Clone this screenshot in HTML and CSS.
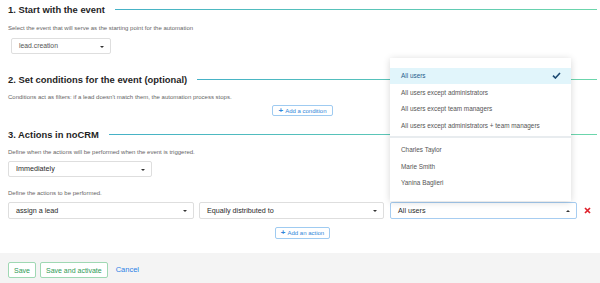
FILE: index.html
```html
<!DOCTYPE html>
<html lang="en">
<head>
    <meta charset="UTF-8">
    <title>Automation</title>
    <link rel="stylesheet" href="styles.css">
</head>
<body>
    <div class="content">
        <h2 class="step-title">1. Start with the event</h2>
        <p class="hint">Select the event that will serve as the starting point for the automation</p>
        <div class="select select-event">lead.creation</div>

        <h2 class="step-title step-gap">2. Set conditions for the event (optional)</h2>
        <p class="hint hint-tight">Conditions act as filters: if a lead doesn't match them, the automation process stops.</p>
        <div class="add-row">
            <button class="add-btn"><span class="plus">+</span> Add a condition</button>
        </div>

        <h2 class="step-title step-gap-small">3. Actions in noCRM</h2>
        <p class="hint hint-tight">Define when the actions will be performed when the event is triggered.</p>
        <div class="select select-when">Immediately</div>

        <p class="hint hint-gap">Define the actions to be performed.</p>
        <div class="action-row">
            <div class="select">assign a lead</div>
            <div class="select">Equally distributed to</div>
            <div class="select-wrap">
                <div class="select select-open">All users</div>
                <ul class="dropdown">
                    <li class="option active">All users
                        <svg class="check" width="9" height="7" viewBox="0 0 9 7"><polyline points="1,3.6 3.4,6 8,1" fill="none" stroke="#1d4a72" stroke-width="1.6"/></svg>
                    </li>
                    <li class="option">All users except administrators</li>
                    <li class="option">All users except team managers</li>
                    <li class="option">All users except administrators + team managers</li>
                    <li class="divider"></li>
                    <li class="option">Charles Taylor</li>
                    <li class="option">Marie Smith</li>
                    <li class="option">Yanina Baglieri</li>
                </ul>
            </div>
            <svg class="remove" width="7" height="7" viewBox="0 0 7 7"><path d="M1 1L6 6M6 1L1 6" stroke="#e0222c" stroke-width="1.7"/></svg>
        </div>
        <div class="add-row add-row-action">
            <button class="add-btn add-btn-tall"><span class="plus">+</span> Add an action</button>
        </div>
    </div>

    <div class="footer">
        <button class="btn-save">Save</button>
        <button class="btn-save">Save and activate</button>
        <a class="cancel" href="#">Cancel</a>
    </div>
</body>
</html>
```

FILE: styles.css
```css
body {
    margin: 0;
    font-family: "Liberation Sans", Arial, sans-serif;
    color: #222;
    background-color: #fff;
}

.content {
    padding: 0 3px 0 8px;
    height: 253px;
    box-sizing: border-box;
}

.step-title {
    display: flex;
    align-items: center;
    margin: 0;
    height: 18px;
    font-size: 9.4px;
    font-weight: bold;
    color: #1f1f1f;
}

.step-title::after {
    content: "";
    flex: 1;
    height: 0;
    margin: 1px 0 0 10px;
    border-top: 1px solid #5cc4b8;
    border-image: linear-gradient(to right, #45b1c7, #6cd6ab) 1;
}

.step-gap {
    margin-top: 16px;
}

.step-gap-small {
    margin-top: 9px;
}

.hint {
    margin: 5px 0 0;
    font-size: 6px;
    line-height: 10px;
    color: #666;
}

.hint-tight {
    margin-top: 4px;
}

.hint-gap {
    margin-top: 11px;
}

.select {
    position: relative;
    box-sizing: border-box;
    height: 17px;
    line-height: 15px;
    padding-left: 7px;
    border: 1px solid #dedede;
    border-radius: 2px;
    font-size: 7.2px;
    color: #2a2a2a;
    background: #fff;
}

.select::after {
    content: "";
    position: absolute;
    right: 6px;
    top: 7px;
    border-left: 2px solid transparent;
    border-right: 2px solid transparent;
    border-top: 2.5px solid #333;
}

.select-event {
    width: 100px;
    height: 16px;
    line-height: 14px;
    margin: 5px 0 0 3px;
    font-size: 6.8px;
    color: #555;
}

.select-when {
    width: 144px;
    height: 16px;
    line-height: 14px;
    margin-top: 4px;
}

.select-open {
    border-color: #a7cdf1;
}

.select-open::after {
    border-top: none;
    border-bottom: 2.5px solid #333;
    top: 6.5px;
}

.add-row {
    display: flex;
    justify-content: center;
    margin-top: 3px;
}

.add-row-action {
    margin-top: 8px;
}

.add-btn {
    display: flex;
    align-items: center;
    gap: 2px;
    height: 11px;
    padding: 0 5px;
    border: 1px solid #9fcbf1;
    border-radius: 2px;
    background: #fff;
    color: #2f86d9;
    font-family: inherit;
    font-size: 6px;
}

.add-btn-tall {
    height: 12px;
}

.plus {
    font-weight: bold;
    font-size: 8px;
    line-height: 8px;
}

.action-row {
    display: grid;
    grid-template-columns: 186px 185px 188px auto;
    gap: 5px;
    align-items: center;
    margin-top: 4px;
}

.select-wrap {
    position: relative;
    margin-left: 1px;
}

.remove {
    margin-left: 2px;
}

.dropdown {
    position: absolute;
    left: 0;
    bottom: 18px;
    width: 181px;
    margin: 0;
    padding: 10px 0;
    list-style: none;
    background: #fff;
    box-shadow: 0 1px 7px rgba(0, 0, 0, 0.16);
}

.option {
    display: flex;
    align-items: center;
    justify-content: space-between;
    height: 16.5px;
    padding: 0 10px 0 11px;
    font-size: 6.4px;
    color: #555;
}

.option.active {
    background-color: #e1f5fb;
    color: #1f5c8c;
}

.divider {
    height: 2px;
    margin: 2px 0 4px;
    background-color: #e8ecef;
}

.footer {
    display: flex;
    align-items: flex-start;
    gap: 4px;
    height: 30px;
    box-sizing: border-box;
    padding: 9px 8px 0;
    background-color: #f4f4f4;
}

.btn-save {
    height: 16px;
    padding: 0 5px;
    border: 1px solid #9fd8b3;
    border-radius: 2px;
    background: #fff;
    color: #2d9a55;
    font-family: inherit;
    font-size: 7px;
}

.cancel {
    margin-left: 4px;
    font-size: 7.5px;
    line-height: 16px;
    color: #2a7fe6;
    text-decoration: none;
}
```
